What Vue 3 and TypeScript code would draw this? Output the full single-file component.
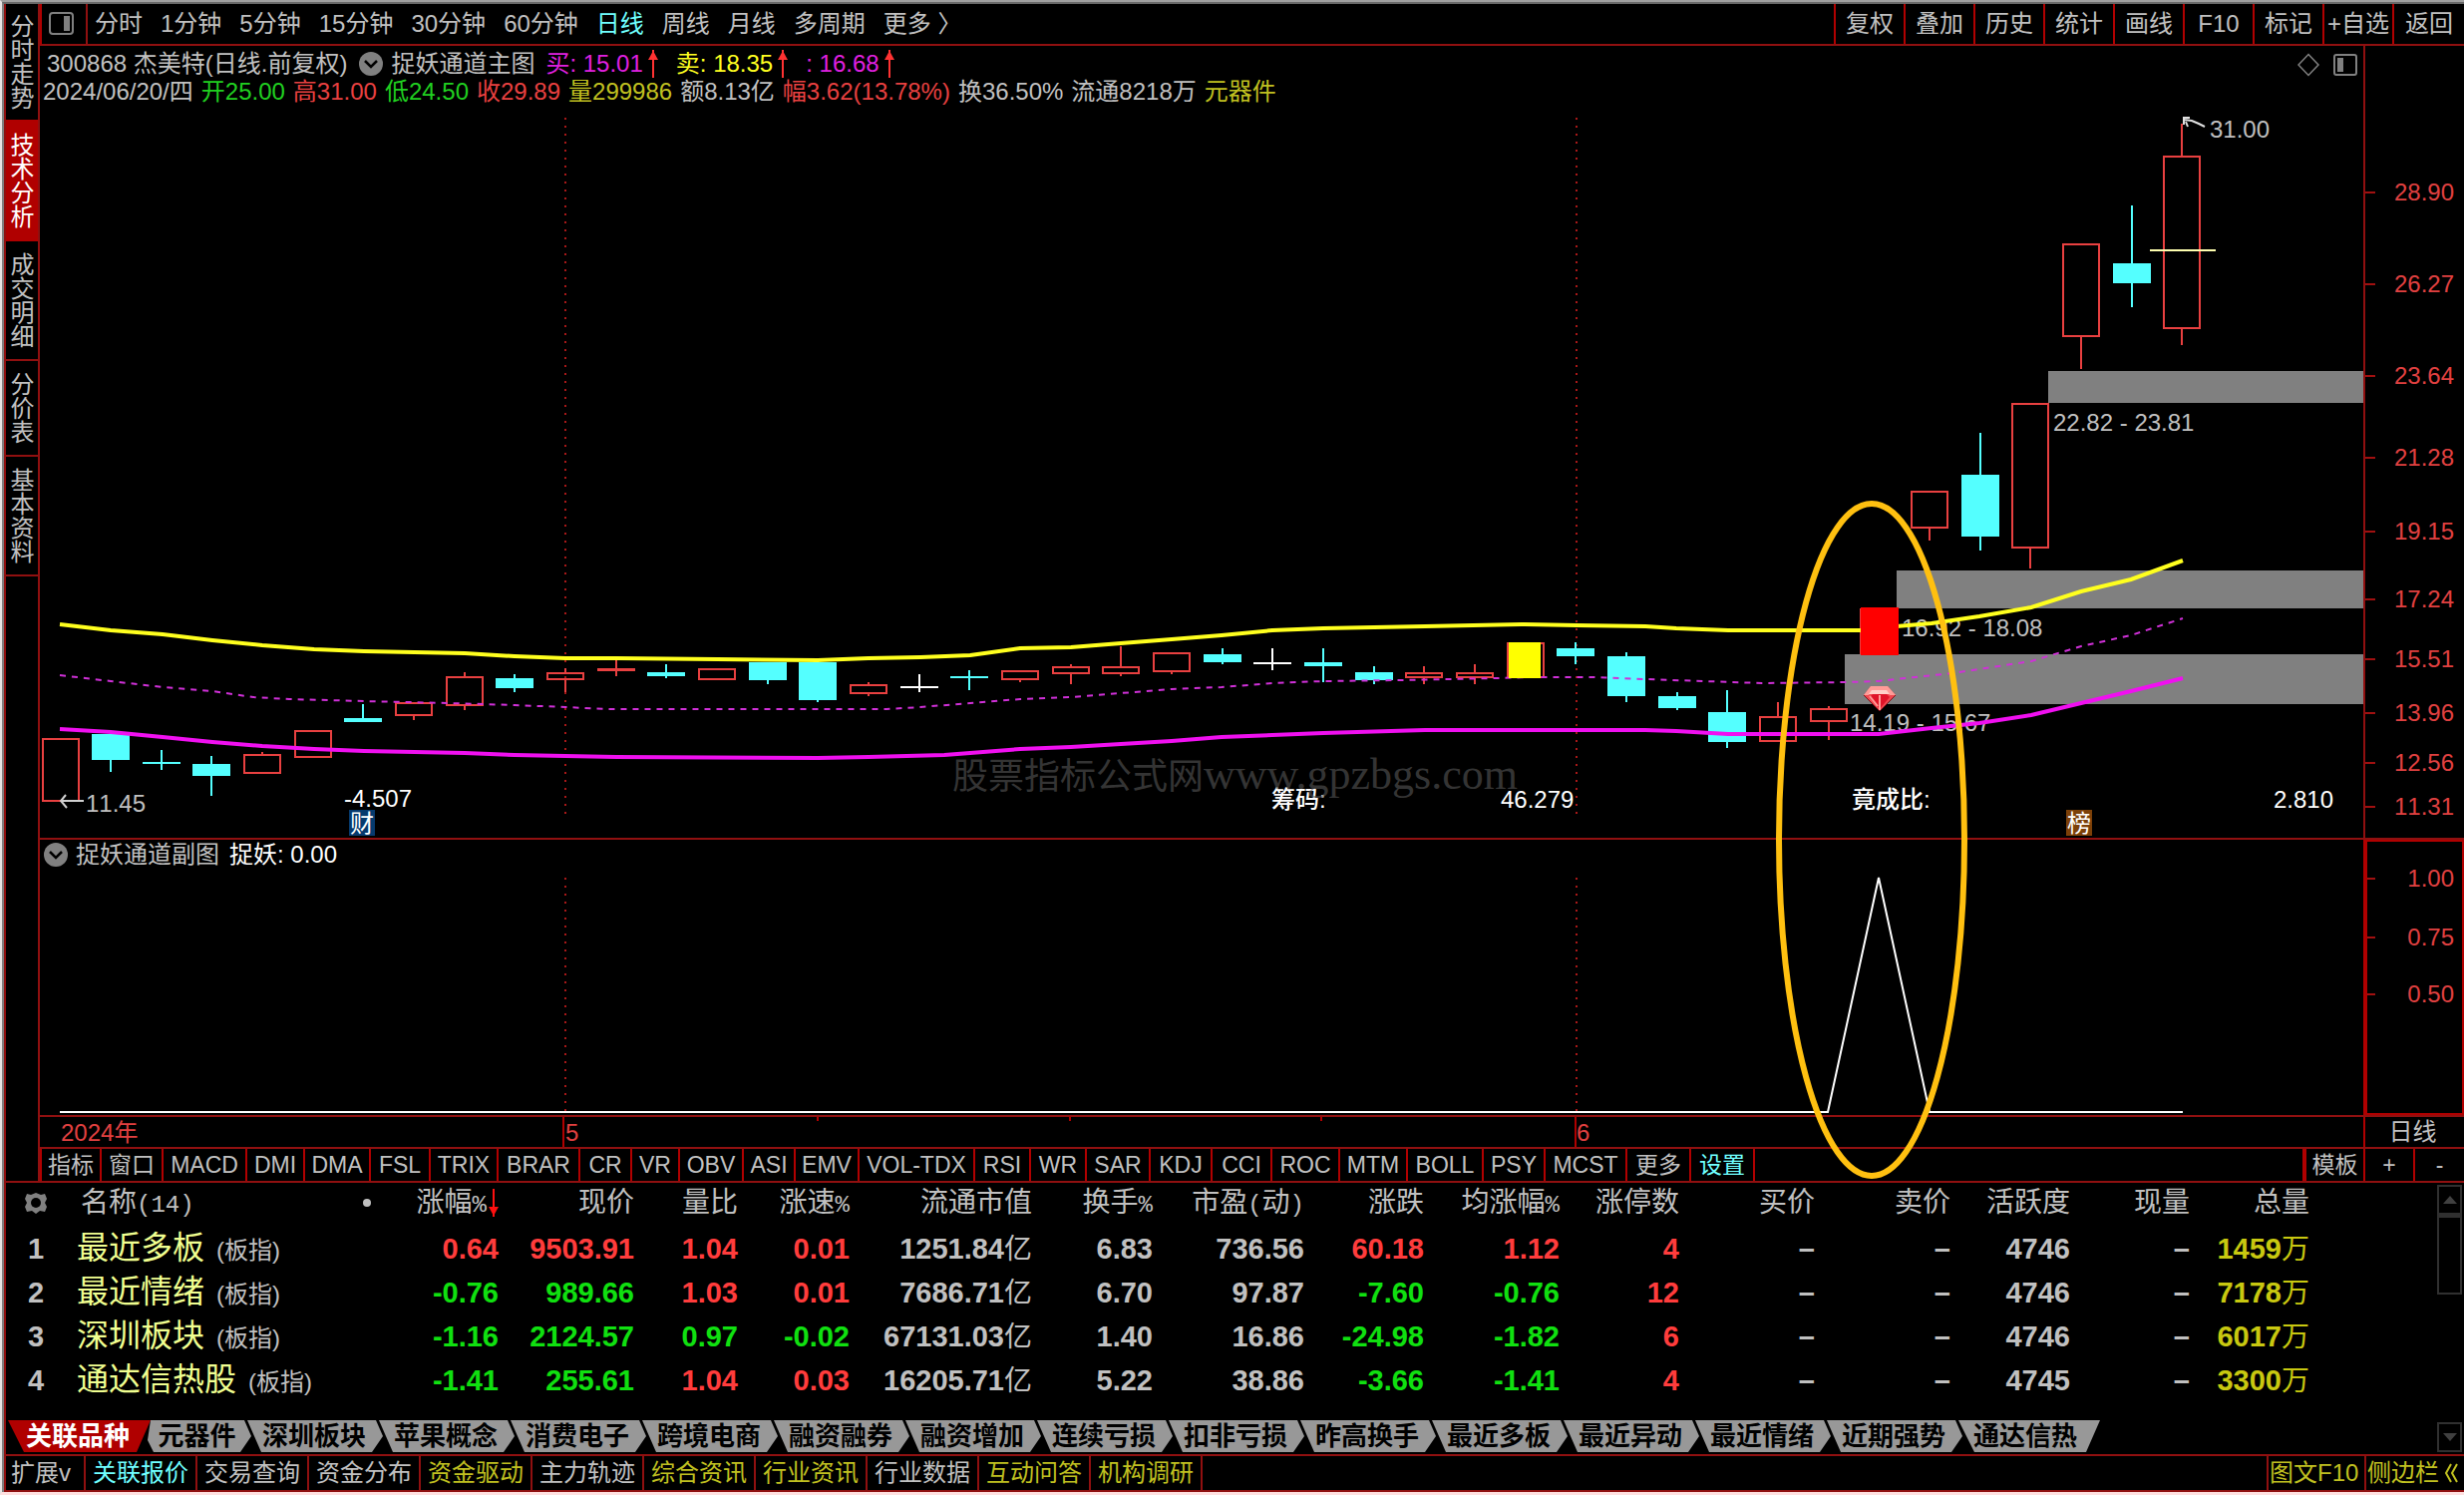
<script setup lang="ts">
type Kind = 'up' | 'down' | 'flat'
interface Candle { kind: Kind; top: number; bottom: number; high: number; low: number }

const sideTabs = ['分时走势', '技术分析', '成交明细', '分价表', '基本资料']
const periods = ['分时', '1分钟', '5分钟', '15分钟', '30分钟', '60分钟', '日线', '周线', '月线', '多周期', '更多 〉']
const tools = ['复权', '叠加', '历史', '统计', '画线', 'F10', '标记', '+自选', '返回']
const quote = [
  { text: '2024/06/20/四', tone: 'plain' },
  { text: '开25.00', tone: 'green' },
  { text: '高31.00', tone: 'red' },
  { text: '低24.50', tone: 'green' },
  { text: '收29.89', tone: 'red' },
  { text: '量299986', tone: 'olive' },
  { text: '额8.13亿', tone: 'plain' },
  { text: '幅3.62(13.78%)', tone: 'red' },
  { text: '换36.50%', tone: 'plain' },
  { text: '流通8218万', tone: 'plain' },
  { text: '元器件', tone: 'olive' },
]
const signals = [
  { text: '买: 15.01', tone: 'magenta' },
  { text: '卖: 18.35', tone: 'yellow' },
  { text: ': 16.68', tone: 'magenta' },
]

const FIRST = 60.5
const STEP = 50.66
const cx = (i: number) => Math.round(FIRST + i * STEP)
const c = (kind: Kind, top: number, bottom: number, high: number, low: number): Candle => ({ kind, top, bottom, high, low })
const candles: Candle[] = [
  c('up', 741, 803, 741, 803), c('down', 736, 762, 736, 774), c('down', 764, 766, 752, 772), c('down', 766, 778, 758, 798),
  c('up', 757, 775, 754, 775), c('up', 733, 759, 733, 759), c('down', 720, 724, 706, 724), c('up', 705, 717, 705, 722),
  c('up', 679, 707, 674, 712), c('down', 680, 690, 676, 694), c('up', 675, 681, 670, 694), c('up', 671, 671, 662, 678),
  c('down', 674, 678, 666, 680), c('up', 671, 681, 671, 681), c('down', 664, 682, 664, 686), c('down', 664, 702, 664, 704),
  c('up', 687, 695, 684, 698), c('flat', 688, 690, 676, 694), c('down', 678, 680, 672, 692), c('up', 673, 681, 673, 684),
  c('up', 669, 675, 666, 686), c('up', 669, 675, 648, 678), c('up', 655, 673, 655, 676), c('down', 656, 664, 650, 666),
  c('flat', 664, 666, 650, 672), c('down', 664, 668, 650, 684), c('down', 674, 682, 668, 686), c('up', 675, 679, 668, 686),
  c('up', 675, 679, 666, 686), c('up', 645, 679, 645, 679), c('down', 650, 658, 644, 666), c('down', 658, 698, 654, 704),
  c('down', 698, 710, 694, 712), c('down', 714, 744, 692, 750), c('up', 719, 743, 704, 743), c('up', 711, 723, 708, 742),
  c('up', 611, 655, 611, 655), c('up', 493, 529, 493, 542), c('down', 476, 538, 434, 552), c('up', 405, 549, 405, 570),
  c('up', 245, 337, 245, 370), c('down', 264, 284, 206, 308), c('up', 157, 329, 124, 346),
]
const tone: Record<Kind, string> = { up: '#e84040', down: '#54ffff', flat: '#ffffff' }

const upperBand = '60,626 111,632 163,636 213,642 263,647 315,651 365,653 466,655 516,658 567,660 618,660 719,661 820,662 871,660 923,659 973,657 1023,650 1074,649 1124,645 1175,641 1225,637 1276,632 1327,630 1429,628 1529,626 1581,627 1650,628 1681,630 1733,632 1868,632 1902,628 1937,625 1985,618 2037,609 2087,593 2137,581 2189,562'
const lowerBand = '60,731 111,734 163,739 213,744 263,748 315,751 365,753 466,755 516,757 567,758 618,759 820,760 871,759 947,757 973,755 1023,751 1074,749 1124,746 1175,743 1225,739 1276,737 1327,735 1429,732 1650,732 1681,733 1733,736 1884,736 1937,730 1985,725 2037,717 2087,705 2137,693 2189,680'
const middleBand = '60,677 111,683 163,689 213,693 254,699 290,701 365,703 450,705 516,707 567,709 609,711 830,711 889,711 923,709 973,705 1023,701 1074,699 1124,695 1175,691 1225,689 1276,685 1327,683 1402,682 1503,680 1534,679 1598,679 1650,681 1709,683 1767,685 1852,684 1884,683 1910,680 1958,675 2037,663 2087,648 2137,637 2189,620'

const gaps = [
  { x: 2054, y: 372, h: 32, label: '22.82 - 23.81', tx: 2059, ty: 432 },
  { x: 1902, y: 572, h: 38, label: '16.92 - 18.08', tx: 1907, ty: 638 },
  { x: 1850, y: 656, h: 50, label: '14.19 - 15.67', tx: 1855, ty: 733 },
]
const priceTicks = [
  ['28.90', 193], ['26.27', 285], ['23.64', 377], ['21.28', 459], ['19.15', 533],
  ['17.24', 601], ['15.51', 661], ['13.96', 715], ['12.56', 765], ['11.31', 809],
] as const
const subTicks = [['1.00', 881], ['0.75', 940], ['0.50', 997]] as const

const indicators: [string, number][] = [
  ['指标', 60], ['窗口', 62], ['MACD', 84], ['DMI', 58], ['DMA', 66], ['FSL', 60], ['TRIX', 68], ['BRAR', 82], ['CR', 52],
  ['VR', 48], ['OBV', 64], ['ASI', 52], ['EMV', 64], ['VOL-TDX', 116], ['RSI', 56], ['WR', 56], ['SAR', 64], ['KDJ', 62],
  ['CCI', 60], ['ROC', 68], ['MTM', 68], ['BOLL', 76], ['PSY', 62], ['MCST', 82], ['更多', 64], ['设置', 64],
]

const columns = ['现价', '量比', '涨速%', '流通市值', '换手%', '市盈(动)', '涨跌', '均涨幅%', '涨停数', '买价', '卖价', '活跃度', '现量', '总量']
const headParts = (h: string) => h.split(/([%()])/).filter(Boolean)
const rows = [
  { name: '最近多板', cells: ['0.64', '9503.91', '1.04', '0.01', '1251.84亿', '6.83', '736.56', '60.18', '1.12', '4', '–', '–', '4746', '–', '1459万'], tones: 'rrrrppprrrppppo' },
  { name: '最近情绪', cells: ['-0.76', '989.66', '1.03', '0.01', '7686.71亿', '6.70', '97.87', '-7.60', '-0.76', '12', '–', '–', '4746', '–', '7178万'], tones: 'ggrrpppggrppppo' },
  { name: '深圳板块', cells: ['-1.16', '2124.57', '0.97', '-0.02', '67131.03亿', '1.40', '16.86', '-24.98', '-1.82', '6', '–', '–', '4746', '–', '6017万'], tones: 'ggggpppggrppppo' },
  { name: '通达信热股', cells: ['-1.41', '255.61', '1.04', '0.03', '16205.71亿', '5.22', '38.86', '-3.66', '-1.41', '4', '–', '–', '4745', '–', '3300万'], tones: 'ggrrpppggrppppo' },
]
const toneName: Record<string, string> = { r: 'up', g: 'fall', p: 'plain', o: 'vol' }
const toneOf = (tones: string, i: number) => toneName[tones[i]]
const number = (v: string) => v.replace(/[亿万]/, '')
const unit = (v: string) => v.match(/[亿万]/)?.[0] ?? ''

const groupTabs = ['关联品种', '元器件', '深圳板块', '苹果概念', '消费电子', '跨境电商', '融资融券', '融资增加', '连续亏损', '扣非亏损', '昨高换手', '最近多板', '最近异动', '最近情绪', '近期强势', '通达信热']
const links = [
  { text: '扩展v', tone: 'plain' }, { text: '关联报价', tone: 'cyan' }, { text: '交易查询', tone: 'plain' },
  { text: '资金分布', tone: 'plain' }, { text: '资金驱动', tone: 'olive' }, { text: '主力轨迹', tone: 'plain' },
  { text: '综合资讯', tone: 'olive' }, { text: '行业资讯', tone: 'olive' }, { text: '行业数据', tone: 'plain' },
  { text: '互动问答', tone: 'olive' }, { text: '机构调研', tone: 'olive' },
]
</script>

<template>
  <div class="window">
    <div class="frame">
      <div class="upper">
        <nav class="side">
          <button v-for="(t, i) in sideTabs" :key="t" type="button" :class="{ first: i === 0, active: i === 1 }">{{ t }}</button>
        </nav>

        <main class="main">
          <header class="topbar">
            <button type="button" class="layout-btn" aria-label="布局">
              <svg width="26" height="24" viewBox="0 0 26 24"><rect x="1" y="1" width="23" height="21" rx="3" fill="none" stroke="#808080" stroke-width="2" /><rect x="15" y="4" width="6" height="15" fill="#808080" /></svg>
            </button>
            <nav class="periods">
              <button v-for="p in periods" :key="p" type="button" :class="{ on: p === '日线' }">{{ p }}</button>
            </nav>
            <nav class="tools">
              <button v-for="t in tools" :key="t" type="button">{{ t }}</button>
            </nav>
          </header>

          <div class="charts">
            <section class="pane">
              <div class="plot">
                <div class="info">
                  <div class="lines">
                    <div class="line title">
                      <span>300868 杰美特(日线.前复权)</span>
                      <svg class="chev" width="24" height="24" viewBox="0 0 24 24"><circle cx="12" cy="12" r="12" fill="#808080" /><path d="M6 9l6 6 6-6" fill="none" stroke="#000" stroke-width="2.5" /></svg>
                      <span>捉妖通道主图</span>
                      <span v-for="s in signals" :key="s.text" class="signal" :class="s.tone">{{ s.text }}<svg width="10" height="28" viewBox="0 0 10 28"><path d="M5 0v28" stroke="#ff3232" stroke-width="2" /><path d="M5 1l5 9H0z" fill="#ff3232" /></svg></span>
                    </div>
                    <div class="line quote">
                      <span v-for="q in quote" :key="q.text" :class="q.tone">{{ q.text }}</span>
                    </div>
                  </div>
                  <svg width="60" height="24" viewBox="0 0 60 24"><path d="M11 1.500l10 10.500-10 10.500L1 12z" fill="none" stroke="#808080" stroke-width="1.500" /><rect x="37" y="2" width="22" height="20" rx="2" fill="none" stroke="#808080" stroke-width="2" /><rect x="40" y="5" width="6" height="14" fill="#808080" /></svg>
                </div>
                <svg class="canvas" viewBox="40 110 2330 730">
                  <g stroke="#a81818" stroke-width="2" stroke-dasharray="2 6"><path d="M567 118V816M1581 118V816" /></g>
                  <g v-for="g in gaps" :key="g.y">
                    <rect :x="g.x" :y="g.y" :width="2370 - g.x" :height="g.h" fill="#808080" />
                    <text :x="g.tx" :y="g.ty" class="t plain">{{ g.label }}</text>
                  </g>
                  <g v-for="(k, i) in candles" :key="i" shape-rendering="crispEdges">
                    <path :d="`M${cx(i)} ${k.high}V${k.top}M${cx(i)} ${k.bottom}V${k.low}`" :stroke="tone[k.kind]" stroke-width="2" />
                    <rect v-if="k.kind === 'up'" :x="cx(i) - 18" :y="k.top" width="36" :height="Math.max(k.bottom - k.top, 1)" fill="none" :stroke="tone.up" stroke-width="2" />
                    <rect v-else :x="cx(i) - 19" :y="k.top" width="38" :height="k.bottom - k.top" :fill="tone[k.kind]" />
                  </g>
                  <polyline :points="middleBand" fill="none" stroke="#d030d8" stroke-width="2" stroke-dasharray="6 6" />
                  <polyline :points="upperBand" fill="none" stroke="#ffff1e" stroke-width="4" />
                  <polyline :points="lowerBand" fill="none" stroke="#f010f0" stroke-width="4" />
                  <rect x="1513" y="644" width="32" height="36" fill="#ffff00" />
                  <rect x="1866" y="609" width="38" height="48" fill="#ff0000" />
                  <path d="M2156 251h66" stroke="#ffffb0" stroke-width="2" />
                  <g>
                    <path d="M1876 688h17l8 9-16 16-16-16z" fill="#f04850" />
                    <path d="M1876 688h17l8 9h-6l-4-5h-13l-4 5h-5z" fill="#ff9c98" />
                    <path d="M1879 695h12l4 4-10 12-10-12z" fill="#e01428" />
                    <path d="M1877 692h15l3 4h-21z" fill="#ffd0c8" />
                    <path d="M1885 697v15M1875 698l8 10" stroke="#ff9c98" stroke-width="2" />
                    <path d="M1869 697l16 16 16-16" fill="none" stroke="#801018" stroke-width="1" />
                  </g>
                  <path d="M2190 117v8M2190 118h6M2190 120l8 1 7 3 6 3M2192 122l2 5" fill="none" stroke="#e0e0e0" stroke-width="2" />
                  <text x="2216" y="138" class="t plain">31.00</text>
                  <path d="M61 803h23M66 797l-5 6 6 7" fill="none" stroke="#d0d0d0" stroke-width="2" />
                  <text x="86" y="814" class="t plain">11.45</text>
                  <text x="345" y="809" class="t white">-4.507</text>
                  <rect x="350" y="812" width="26" height="26" fill="#063a6e" />
                  <text x="351" y="834" class="t white">财</text>
                  <text x="1275" y="810" class="t white strong">筹码:</text>
                  <text x="1505" y="810" class="t white">46.279</text>
                  <text x="1857" y="810" class="t white strong">竟成比:</text>
                  <text x="2280" y="810" class="t white">2.810</text>
                  <rect x="2072" y="812" width="26" height="26" fill="#7c4008" />
                  <text x="2073" y="834" class="t white">榜</text>
                  <text x="955" y="791" class="mark"><tspan class="mark-cn">股票指标公式网</tspan>www.gpzbgs.com</text>
                </svg>
              </div>
              <svg class="axis" viewBox="2372 46 99 794">
                <g v-for="t in priceTicks" :key="t[0]">
                  <path :d="`M2372 ${t[1]}h10`" stroke="#a01010" stroke-width="2" />
                  <text x="2461" :y="t[1] + 8" class="t scale">{{ t[0] }}</text>
                </g>
              </svg>
            </section>

            <section class="pane sub">
              <div class="plot">
                <div class="info sub-info">
                  <svg class="chev" width="24" height="24" viewBox="0 0 24 24"><circle cx="12" cy="12" r="12" fill="#808080" /><path d="M6 9l6 6 6-6" fill="none" stroke="#000" stroke-width="2.500" /></svg>
                  <span>捉妖通道副图</span><span class="white">捉妖: 0.00</span>
                </div>
                <svg class="canvas" viewBox="40 874 2330 244">
                  <g stroke="#a81818" stroke-width="2" stroke-dasharray="2 6"><path d="M567 880V1114M1581 880V1114" /></g>
                  <path d="M60 1115H1833L1884 880L1935 1115H2189" fill="none" stroke="#fff" stroke-width="2" />
                </svg>
              </div>
              <svg class="axis sub-axis" viewBox="2374 844 95 272">
                <g v-for="t in subTicks" :key="t[0]">
                  <path :d="`M2374 ${t[1]}h8`" stroke="#a01010" stroke-width="2" />
                  <text x="2461" :y="t[1] + 8" class="t scale">{{ t[0] }}</text>
                </g>
              </svg>
            </section>

            <section class="dates">
              <svg class="canvas" viewBox="40 1120 2330 30">
                <path d="M565 1120v30M1580 1120v30M820 1120v4M1073 1120v4M1325 1120v4" stroke="#b00000" stroke-width="2" />
                <text x="61" y="1144" class="t date">2024年</text>
                <text x="567" y="1144" class="t date">5</text>
                <text x="1581" y="1144" class="t date">6</text>
              </svg>
              <button type="button" class="cycle">日线</button>
            </section>

            <nav class="indicators">
              <button v-for="n in indicators" :key="n[0]" type="button" :class="{ on: n[0] === '设置' }" :style="{ width: n[1] + 'px' }">{{ n[0] }}</button>
              <span class="spring"></span>
              <button type="button" class="tpl">模板</button>
              <button type="button" class="zoom">+</button>
              <button type="button" class="zoom last">-</button>
            </nav>

            <svg class="ring" viewBox="40 46 2431 1138"><ellipse cx="1877" cy="842" rx="93" ry="337" fill="none" stroke="#ffc010" stroke-width="6" /></svg>
          </div>
        </main>
      </div>

      <section class="board">
        <div class="lists">
          <table>
            <colgroup>
              <col style="width: 56px" /><col style="width: 338px" /><col style="width: 100px" /><col style="width: 136px" />
              <col style="width: 104px" /><col style="width: 112px" /><col style="width: 183px" /><col style="width: 121px" />
              <col style="width: 152px" /><col style="width: 120px" /><col style="width: 136px" /><col style="width: 120px" />
              <col style="width: 136px" /><col style="width: 136px" /><col style="width: 120px" /><col style="width: 120px" />
              <col style="width: 120px" /><col />
            </colgroup>
            <thead>
              <tr>
                <th class="no"><svg width="28" height="26" viewBox="0 0 28 26"><path d="M14 3l5 2 4-1 2 5-2 4 2 4-2 5-5-1-4 3-4-3-5 1-2-5 2-4-2-4 2-5 4 1z" fill="#808080" /><circle cx="14" cy="13" r="5" fill="#000" /></svg></th>
                <th class="name"><span class="head-name"><span>名称<span class="half">(14)</span></span><i class="dot"></i></span></th>
                <th class="sort">涨幅<span class="half">%</span><svg width="10" height="28" viewBox="0 0 10 28"><path d="M5 0v28" stroke="#ff1010" stroke-width="2" /><path d="M5 27l5-9H0z" fill="#ff1010" /></svg></th>
                <th v-for="h in columns" :key="h"><span v-for="(p, k) in headParts(h)" :key="k" :class="{ half: /[%()]/.test(p) }">{{ p }}</span></th>
                <th></th>
              </tr>
            </thead>
            <tbody>
              <tr v-for="(r, n) in rows" :key="r.name">
                <td class="no">{{ n + 1 }}</td>
                <td class="name">{{ r.name }}<small>(板指)</small></td>
                <td v-for="(v, i) in r.cells" :key="i" :class="toneOf(r.tones, i)">{{ number(v) }}<span v-if="unit(v)" class="unit">{{ unit(v) }}</span></td>
                <td></td>
              </tr>
            </tbody>
          </table>
          <nav class="groups">
            <button v-for="(g, i) in groupTabs" :key="g" type="button" :class="{ active: i === 0, second: i === 1, end: i === groupTabs.length - 1 }">{{ g }}</button>
          </nav>
        </div>
        <div class="scroll">
          <button type="button" aria-label="向上"><svg width="14" height="8" viewBox="0 0 14 8"><path d="M0 8h14L7 0z" fill="#404040" /></svg></button>
          <div class="thumb"></div>
          <span class="spring"></span>
          <button type="button" aria-label="向下"><svg width="14" height="8" viewBox="0 0 14 8"><path d="M0 0h14L7 8z" fill="#404040" /></svg></button>
        </div>
      </section>

      <footer class="links">
        <a v-for="l in links" :key="l.text" href="#" :class="l.tone">{{ l.text }}</a>
        <span class="spring"></span>
        <a href="#" class="olive edge">图文F10</a>
        <a href="#" class="olive edge dock"><span>侧边栏</span><svg width="14" height="20" viewBox="0 0 14 20"><path d="M7 1L2 10l5 9M13 1l-5 9 5 9" fill="none" stroke="#c0c020" stroke-width="2" /></svg></a>
      </footer>
    </div>
  </div>
</template>

<style>
body { margin: 0; background: #000; }
</style>

<style scoped>
* { box-sizing: border-box; }
.window {
  border-top: 2px solid #a0a0a0;
  border-left: 2px solid #e8e4e4;
  border-bottom: 3px solid #ffe0e0;
  background: #000;
  color: #c0c0c0;
  font: 24px/28px "Liberation Sans", "Noto Sans CJK SC", sans-serif;
  font-kerning: none;
}
.frame { border-top: 2px solid #696969; border-left: 2px solid #808080; }
button { margin: 0; padding: 0; border: 0; background: none; color: inherit; font: inherit; font-kerning: none; white-space: nowrap; }
a { color: inherit; text-decoration: none; }
svg { display: block; }
.plain { color: #c0c0c0; }
.green { color: #20d020; }
.red { color: #e84040; }
.olive { color: #c0c020; }
.magenta { color: #e020e0; }
.yellow { color: #ffff20; }
.cyan { color: #70ffff; }
.white { color: #fff; }
.spring { flex: 1; }

.upper { display: flex; border-bottom: 2px solid #901010; border-left: 2px solid #901010; }
.side { display: flex; flex: 0 0 34px; flex-direction: column; border-right: 2px solid #901010; }
.side button { padding: 11px 4px 11px 0; border-bottom: 2px solid #901010; line-height: 28px; writing-mode: vertical-rl; text-align: left; }
.side .first { padding: 10px 4px 10px 0; border: 0; }
.side .active { padding: 13px 4px 13px 0; border: 0; background: #b00000; color: #fff; }
.main { flex: 1; min-width: 0; }

.topbar { display: flex; height: 42px; border-bottom: 2px solid #901010; border-left: 2px solid #b00000; line-height: 40px; }
.layout-btn { display: flex; align-items: center; width: 46px; padding-left: 7px; border-right: 2px solid #901010; }
.periods { display: flex; flex: 1; gap: 18px; padding-left: 7px; }
.on { color: #70ffff; }
.tools { display: flex; }
.tools button { width: 70px; border-left: 2px solid #b00000; }
.tools button:last-child { width: 72px; }

.charts { position: relative; }
.pane { display: flex; border-bottom: 2px solid #901010; }
.plot { flex: 1; min-width: 0; }
.info { display: flex; align-items: flex-start; height: 64px; padding: 4px 6px 0 3px; }
.lines { flex: 1; }
.info > svg:last-child { margin-top: 3px; }
.line { display: flex; white-space: nowrap; }
.title { padding-left: 4px; }
.title .chev { margin: 2px 8px 0 12px; }
.signal { display: flex; gap: 5px; margin-left: 11px; }
.signal + .signal { margin-left: 18px; }
.quote { gap: 8px; }
.sub-info { height: 32px; padding: 0 0 2px 4px; align-items: center; white-space: nowrap; }
.sub-info span { margin-left: 8px; }
.sub-info .white { margin-left: 10px; }
.canvas { width: 100%; height: auto; }
.axis { flex: 0 0 101px; border-left: 2px solid #901010; }
.sub-axis { border: 2px solid #b00000; border-left-width: 4px; }
.t { font-size: 24px; fill: #c0c0c0; }
.t.white { fill: #fff; }
.t.strong { font-weight: 500; }
.t.scale { fill: #e04040; text-anchor: end; }
.t.date { fill: #e04040; }
.mark { font: 44px "Liberation Serif", "Noto Sans CJK SC", serif; fill: #585858; fill-opacity: 0.6; }
.mark-cn { font-size: 36px; }
.dates { display: flex; border-bottom: 2px solid #901010; }
.dates .canvas { flex: 1; width: auto; min-width: 0; }
.cycle { flex: 0 0 101px; border-left: 2px solid #b00000; padding-right: 4px; line-height: 28px; }
.indicators { display: flex; height: 32px; border-left: 2px solid #b00000; line-height: 30px; font-size: 23px; }
.indicators button { border-right: 2px solid #b00000; }
.indicators .tpl { width: 63px; border-left: 4px solid #b00000; }
.indicators .zoom { width: 50px; }
.indicators .last { width: 49px; border: 0; }
.ring { position: absolute; top: 0; left: 0; width: 100%; height: auto; pointer-events: none; }

.board { display: flex; border-left: 2px solid #901010; }
.lists { flex: 1; min-width: 0; }
table { width: 100%; table-layout: fixed; border-collapse: collapse; font-size: 28px; line-height: 32px; }
th, td { height: 44px; padding: 0; text-align: right; white-space: nowrap; }
th { padding-bottom: 4px; font-weight: 400; }
td { font-size: 29px; font-weight: 700; }
.no { padding-left: 10px; padding-right: 6px; text-align: center; }
.no svg { margin: 0 auto; }
.name { padding-left: 15px; text-align: left; }
td.name { color: #f0ff90; font-size: 32px; font-weight: 400; }
td.name small { margin-left: 12px; color: #c0c0c0; font-size: 24px; }
.head-name { display: flex; align-items: center; justify-content: space-between; padding: 0 28px 0 4px; }
.dot { width: 8px; height: 8px; border-radius: 4px; background: #c0c0c0; }
.half { font: 24px "Liberation Mono", monospace; }
.sort svg { display: inline-block; margin-left: 2px; vertical-align: -5px; }
.unit { font-size: 28px; font-weight: 400; }
.up { color: #ff3c3c; }
.fall { color: #10e010; }
.vol { color: #c8c810; }

.groups { display: flex; margin-top: 18px; padding: 0 0 2px 2px; }
.groups button {
  width: 137px; height: 32px; margin-right: -5px; padding-right: 3px; background: #989898; color: #000;
  font-size: 26px; font-weight: 700; line-height: 30px;
  clip-path: polygon(0 0, 129px 0, 136px 16px, 125px 32px, 14px 32px);
}
.groups .active { width: 143px; background: #b00000; color: #fff; clip-path: polygon(0 0, 143px 0, 129px 32px, 16px 32px); }
.groups .second { width: 105px; margin-left: 2px; padding-right: 6px; clip-path: polygon(3px 0, 97px 0, 104px 16px, 93px 32px, 6px 32px, 0 20px); }
.groups .end { width: 142px; margin: 0; padding-right: 8px; clip-path: polygon(0 0, 142px 0, 128px 32px, 16px 32px); }

.scroll { display: flex; flex: 0 0 27px; flex-direction: column; padding: 2px 2px 2px 0; }
.scroll button { display: flex; align-items: center; justify-content: center; height: 30px; border: 2px solid #303030; }
.thumb { height: 80px; border: 2px solid #303030; border-top-width: 3px; }

.links { display: flex; height: 38px; border: 2px solid #901010; border-right: 0; line-height: 34px; white-space: nowrap; }
.links a { width: 112px; border-right: 2px solid #901010; padding-left: 7px; }
.links a:first-child { width: 80px; padding-left: 5px; }
.links .edge { width: 98px; padding-left: 1px; border-right: 0; border-left: 2px solid #901010; }
.links .dock { display: flex; gap: 5px; align-items: center; width: 100px; }
</style>
